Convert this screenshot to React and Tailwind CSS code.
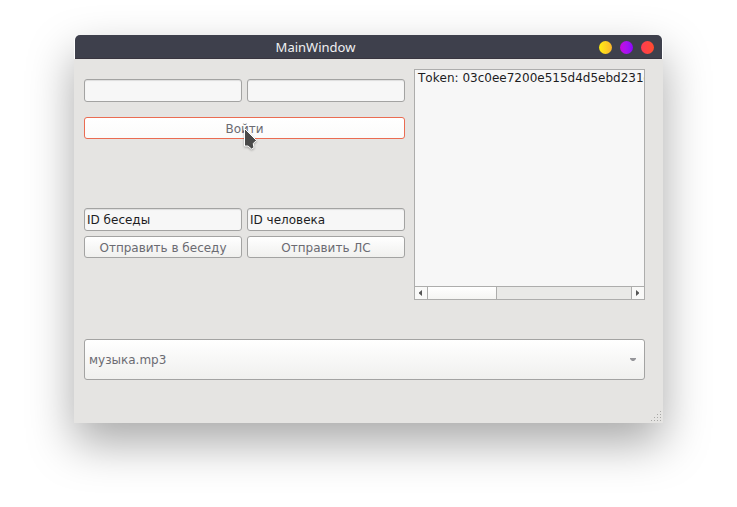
const field =
  'h-[23px] w-[158px] rounded-[3px] border border-[#a3a3a2] bg-[#f7f7f7] px-0.5 text-xs text-[#1d1d1f] shadow-[inset_0_1px_1px_rgba(0,0,0,0.1)] outline-none';
const button =
  'flex h-[22px] items-center justify-center rounded-[3px] border bg-linear-to-b pt-px text-xs leading-none text-[#6b6b72]';

function TitleBar() {
  return (
    <header className="mx-px flex h-6 items-center rounded-t-[5px] border-b border-[#38353f] bg-[#3e404c] pr-[8px]">
      <h1 className="w-[481px] pt-px text-center font-['Noto_Sans',sans-serif] text-[13px] leading-[18px] text-[#f0f0f2]">MainWindow</h1>
      <div className="ml-auto flex gap-2 pt-px">
        <span className="size-[13px] rounded-full bg-linear-to-r from-[#ffee0c] to-[#fab52b]" />
        <span className="size-[13px] rounded-full bg-linear-to-r from-[#c800df] to-[#8a00ff]" />
        <span className="size-[13px] rounded-full bg-linear-to-r from-[#ff3b51] to-[#ff4c2b]" />
      </div>
    </header>
  );
}

function ScrollBar() {
  return (
    <div className="flex h-[13px] border-t border-[#adadac] bg-[#e9e9e7]">
      <div className="flex w-[13px] items-center justify-center border-r border-[#adadac] bg-[#f9f9f8]">
        <svg width="4" height="6" viewBox="0 0 4 6"><path d="M3 0v6L0 3.5v-1z" fill="#555" /></svg>
      </div>
      <div className="w-[69px] border-r border-[#adadac] bg-linear-to-b from-white to-[#f5f5f3]" />
      <div className="flex-1" />
      <div className="flex w-[13px] items-center justify-center border-l border-[#adadac] bg-[#f9f9f8]">
        <svg width="4" height="6" viewBox="0 0 4 6"><path d="M0 0v6l3-2.5v-1z" fill="#555" /></svg>
      </div>
    </div>
  );
}

function SizeGrip() {
  const dots = [[9, 0], [6, 3], [9, 3], [3, 6], [6, 6], [9, 6], [0, 9], [3, 9], [6, 9], [9, 9]];
  return (
    <svg className="absolute right-[2px] bottom-[2px]" width="10" height="10" shapeRendering="crispEdges">
      {dots.map(([x, y]) => (
        <rect key={`${x}-${y}`} x={x} y={y} width="1" height="1" fill="#a8a8a6" />
      ))}
    </svg>
  );
}

export default function App() {
  return (
    <div className="h-[507px] w-[737px] overflow-hidden bg-white pl-[74px] pt-[35px] font-['DejaVu_Sans',sans-serif]">
      <div className="relative h-[388px] w-[589px] rounded-t-[5px] shadow-[0_20px_46px_rgba(0,0,0,0.34)]">
        <TitleBar />
        <main className="h-[364px] bg-[#e5e4e2] pl-[10px] pr-[18px] pt-[10px]">
          <div className="flex justify-between">
            <div className="w-[321px] pt-[10px]">
              <div className="flex justify-between">
                <input className={field} aria-label="Login" />
                <input className={field} aria-label="Password" />
              </div>
              <button className={`${button} relative mt-[15px] w-full border-[#ea6c52] from-white to-[#fbfbfa]`}>
                Войти
                <svg className="absolute left-[159px] top-[10px] overflow-visible drop-shadow-[0_1px_1px_rgba(0,0,0,0.3)]" width="15" height="23" viewBox="0 0 15 23">
                  <path
                    d="M.5.5v17.5h3.5l3.5 3 2.5-1.5-.8-4 3.3-3z"
                    fill="#4a4a4a"
                    stroke="#fff"
                    strokeLinejoin="round"
                  />
                </svg>
              </button>
              <div className="mt-[69px] flex justify-between">
                <input className={field} defaultValue="ID беседы" aria-label="Chat" />
                <input className={field} defaultValue="ID человека" aria-label="Person" />
              </div>
              <div className="mt-[5px] flex justify-between">
                <button className={`${button} w-[158px] border-[#a3a3a2] from-white to-[#f0f0ee]`}>Отправить в беседу</button>
                <button className={`${button} w-[158px] border-[#a3a3a2] from-white to-[#f0f0ee]`}>Отправить ЛС</button>
              </div>
            </div>
            <section className="flex h-[231px] w-[231px] flex-col border border-[#adadac] bg-[#f7f7f7]">
              <p className="flex-1 overflow-hidden whitespace-nowrap pl-[3px] pt-px text-xs leading-[14px] [font-kerning:none] text-[#1d1d1f]">
                Token: 03c0ee7200e515d4d5ebd231c
              </p>
              <ScrollBar />
            </section>
          </div>
          <button className="mt-[39px] flex h-[41px] w-full items-center justify-between rounded-[3px] border border-[#a3a3a2] bg-linear-to-b from-white to-[#f0f0ee] pl-1 pr-[7px] text-xs leading-none text-[#6b6b72]">
            музыка.mp3
            <svg width="7" height="4" viewBox="0 0 7 4"><path d="M0 0h6v1L4 3H2L0 1z" fill="#96969a" /></svg>
          </button>
        </main>
        <SizeGrip />
      </div>
    </div>
  );
}
